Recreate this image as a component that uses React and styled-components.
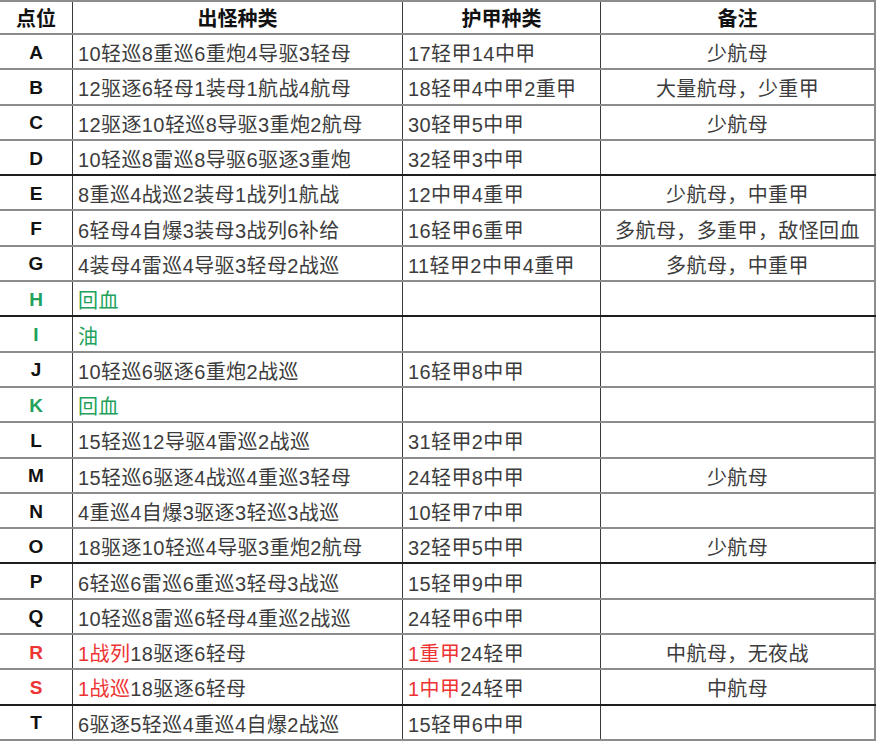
import React from 'react';
import styled, { createGlobalStyle } from 'styled-components';

const GlobalStyle = createGlobalStyle`
  html, body {
    margin: 0;
    padding: 0;
    background: #ffffff;
  }
  body {
    font-family: 'Liberation Sans', 'Noto Sans CJK SC', sans-serif;
  }
`;

const Sheet = styled.div`
  width: 876px;
  border-top: 2px solid #8c8c8c;
`;

const Row = styled.div`
  display: grid;
  grid-template-columns: 73px 330px 198px 275px;
  height: ${(p) => (p.$head ? '33px' : '35.3px')};
  box-sizing: border-box;
  border-bottom: ${(p) => (p.$thick ? '2px solid #1e1e1e' : '2px solid #8c8c8c')};
`;

const Cell = styled.div`
  display: flex;
  align-items: center;
  justify-content: ${(p) => (p.$center ? 'center' : 'flex-start')};
  padding-left: ${(p) => (p.$center ? '0' : '5px')};
  padding-top: 2px;
  border-right: ${(p) => (p.$last ? '2px solid #8c8c8c' : '1px solid #3a3a3a')};
  font-size: 20px;
  letter-spacing: 0.4px;
  font-weight: 400;
  color: #3c3c3c;
  white-space: nowrap;
  overflow: hidden;
`;

const HeadCell = styled(Cell)`
  padding-top: 0;
  letter-spacing: 0;
  font-weight: 700;
  color: #111;
`;

const KeyCell = styled(Cell)`
  font-size: 19px;
  letter-spacing: 0;
  font-weight: 700;
  color: #111;
`;

const Tone = styled.span`
  color: ${(p) => (p.$tone === 'green' ? '#21a25a' : p.$tone === 'red' ? '#ee3333' : 'inherit')};
`;

const rows = [
  { id: 'A', kind: '10轻巡8重巡6重炮4导驱3轻母', armor: '17轻甲14中甲', note: '少航母' },
  { id: 'B', kind: '12驱逐6轻母1装母1航战4航母', armor: '18轻甲4中甲2重甲', note: '大量航母，少重甲' },
  { id: 'C', kind: '12驱逐10轻巡8导驱3重炮2航母', armor: '30轻甲5中甲', note: '少航母' },
  { id: 'D', kind: '10轻巡8雷巡8导驱6驱逐3重炮', armor: '32轻甲3中甲', note: '', thick: true },
  { id: 'E', kind: '8重巡4战巡2装母1战列1航战', armor: '12中甲4重甲', note: '少航母，中重甲' },
  { id: 'F', kind: '6轻母4自爆3装母3战列6补给', armor: '16轻甲6重甲', note: '多航母，多重甲，敌怪回血' },
  { id: 'G', kind: '4装母4雷巡4导驱3轻母2战巡', armor: '11轻甲2中甲4重甲', note: '多航母，中重甲' },
  { id: 'H', kind: '回血', armor: '', note: '', tone: 'green', thick: true },
  { id: 'I', kind: '油', armor: '', note: '', tone: 'green' },
  { id: 'J', kind: '10轻巡6驱逐6重炮2战巡', armor: '16轻甲8中甲', note: '' },
  { id: 'K', kind: '回血', armor: '', note: '', tone: 'green' },
  { id: 'L', kind: '15轻巡12导驱4雷巡2战巡', armor: '31轻甲2中甲', note: '' },
  { id: 'M', kind: '15轻巡6驱逐4战巡4重巡3轻母', armor: '24轻甲8中甲', note: '少航母' },
  { id: 'N', kind: '4重巡4自爆3驱逐3轻巡3战巡', armor: '10轻甲7中甲', note: '' },
  { id: 'O', kind: '18驱逐10轻巡4导驱3重炮2航母', armor: '32轻甲5中甲', note: '少航母', thick: true },
  { id: 'P', kind: '6轻巡6雷巡6重巡3轻母3战巡', armor: '15轻甲9中甲', note: '' },
  { id: 'Q', kind: '10轻巡8雷巡6轻母4重巡2战巡', armor: '24轻甲6中甲', note: '' },
  { id: 'R', kind: ['1战列', '18驱逐6轻母'], armor: ['1重甲', '24轻甲'], note: '中航母，无夜战', tone: 'red' },
  { id: 'S', kind: ['1战巡', '18驱逐6轻母'], armor: ['1中甲', '24轻甲'], note: '中航母', tone: 'red', thick: true },
  { id: 'T', kind: '6驱逐5轻巡4重巡4自爆2战巡', armor: '15轻甲6中甲', note: '' },
];

// a pair means [coloured lead, plain rest]
const renderText = (value, tone) => {
  if (Array.isArray(value)) {
    return (
      <>
        <Tone $tone={tone}>{value[0]}</Tone>
        {value[1]}
      </>
    );
  }
  return <Tone $tone={tone}>{value}</Tone>;
};

const App = () => (
  <>
    <GlobalStyle />
    <Sheet>
      <Row $head>
        <HeadCell $center>点位</HeadCell>
        <HeadCell $center>出怪种类</HeadCell>
        <HeadCell $center>护甲种类</HeadCell>
        <HeadCell $center $last>备注</HeadCell>
      </Row>
      {rows.map((r) => (
        <Row key={r.id} $thick={r.thick}>
          <KeyCell $center>
            <Tone $tone={r.tone}>{r.id}</Tone>
          </KeyCell>
          <Cell>{renderText(r.kind, r.tone)}</Cell>
          <Cell>{renderText(r.armor, r.tone)}</Cell>
          <Cell $center $last>{r.note}</Cell>
        </Row>
      ))}
    </Sheet>
  </>
);

export default App;
